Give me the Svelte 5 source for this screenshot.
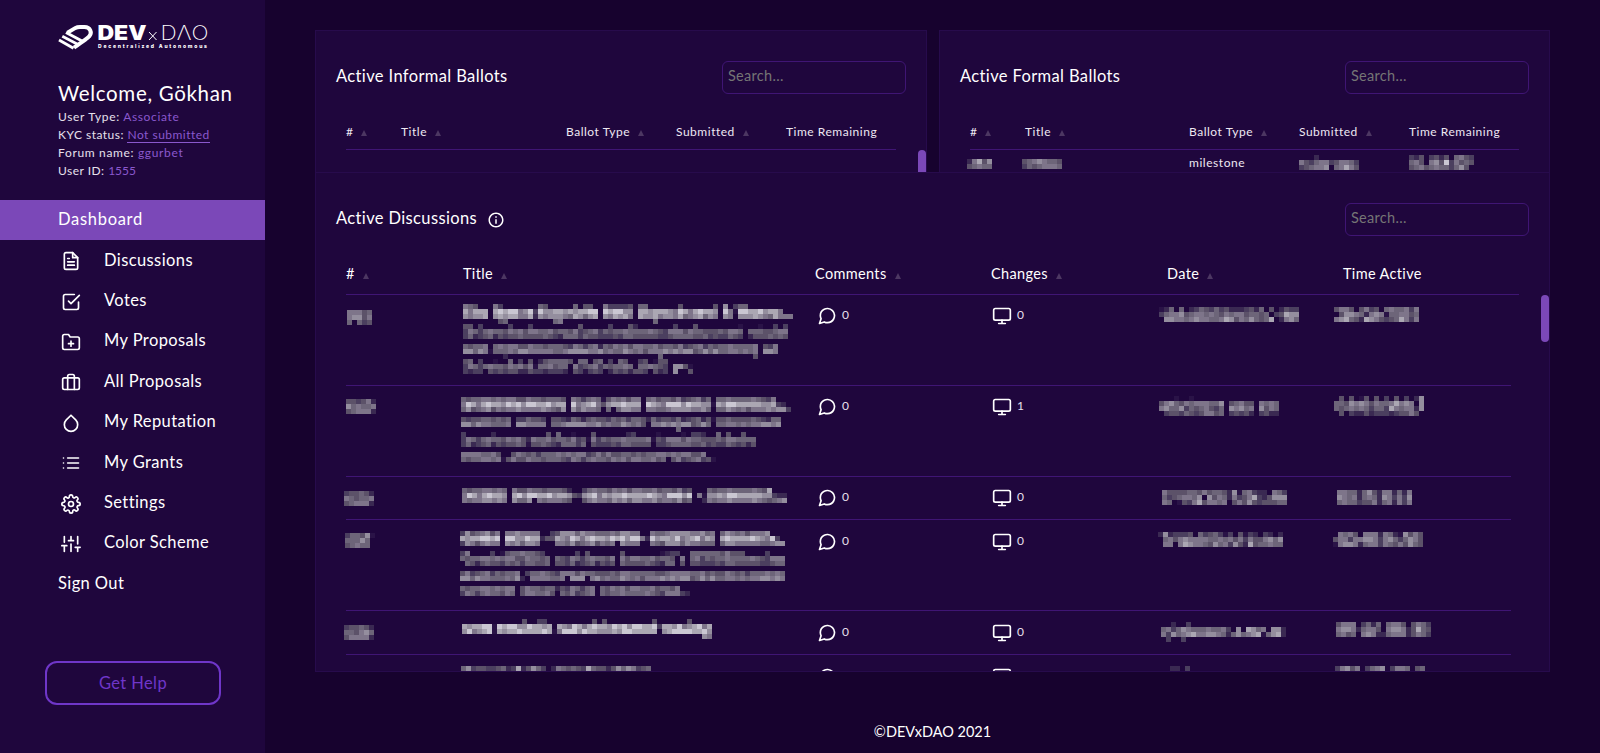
<script>
  const nav = [
    { label: 'Discussions', icon: 'file' },
    { label: 'Votes', icon: 'check' },
    { label: 'My Proposals', icon: 'folder' },
    { label: 'All Proposals', icon: 'briefcase' },
    { label: 'My Reputation', icon: 'droplet' },
    { label: 'My Grants', icon: 'list' },
    { label: 'Settings', icon: 'settings' },
    { label: 'Color Scheme', icon: 'sliders' },
  ];

  const icons = {
    file: '<path d="M14 2H6a2 2 0 0 0-2 2v16a2 2 0 0 0 2 2h12a2 2 0 0 0 2-2V8z"/><path d="M14 2v6h6M16 13H8M16 17H8M10 9H8"/>',
    check: '<path d="M9 11l3 3L22 4"/><path d="M21 12v7a2 2 0 0 1-2 2H5a2 2 0 0 1-2-2V5a2 2 0 0 1 2-2h11"/>',
    folder: '<path d="M22 19a2 2 0 0 1-2 2H4a2 2 0 0 1-2-2V5a2 2 0 0 1 2-2h5l2 3h9a2 2 0 0 1 2 2z"/><path d="M12 11v6M9 14h6"/>',
    briefcase: '<rect x="2" y="7" width="20" height="14" rx="2"/><path d="M16 21V5a2 2 0 0 0-2-2h-4a2 2 0 0 0-2 2v16"/>',
    droplet: '<path d="M12 2.69l5.66 5.66a8 8 0 1 1-11.310 0z"/>',
    list: '<path d="M8 6h13M8 12h13M8 18h13M3 6h.01M3 12h.01M3 18h.01"/>',
    settings: '<circle cx="12" cy="12" r="3"/><path d="M19.4 15a1.650 1.650 0 0 0 .33 1.820l.06.06a2 2 0 0 1-2.830 2.830l-.06-.06a1.650 1.650 0 0 0-1.820-.33 1.650 1.650 0 0 0-1 1.510V21a2 2 0 0 1-4 0v-.09A1.650 1.650 0 0 0 9 19.400a1.650 1.650 0 0 0-1.820.33l-.06.06a2 2 0 0 1-2.830-2.830l.06-.06a1.650 1.650 0 0 0 .33-1.820 1.650 1.650 0 0 0-1.510-1H3a2 2 0 0 1 0-4h.09A1.650 1.650 0 0 0 4.600 9a1.650 1.650 0 0 0-.33-1.820l-.06-.06a2 2 0 0 1 2.830-2.830l.06.06a1.650 1.650 0 0 0 1.820.33H9a1.650 1.650 0 0 0 1-1.510V3a2 2 0 0 1 4 0v.09a1.650 1.650 0 0 0 1 1.510 1.650 1.650 0 0 0 1.820-.33l.06-.06a2 2 0 0 1 2.830 2.830l-.06.06a1.650 1.650 0 0 0-.33 1.820V9a1.650 1.650 0 0 0 1.510 1H21a2 2 0 0 1 0 4h-.09a1.650 1.650 0 0 0-1.510 1z"/>',
    sliders: '<path d="M4 21v-7M4 10V3M12 21v-9M12 8V3M20 21v-5M20 12V3M1 14h6M9 8h6M17 16h6"/>',
    comment: '<path d="M21 11.500a8.380 8.380 0 0 1-.9 3.800 8.500 8.500 0 0 1-7.600 4.700 8.380 8.380 0 0 1-3.800-.9L3 21l1.900-5.700a8.380 8.380 0 0 1-.9-3.800 8.500 8.500 0 0 1 4.700-7.600 8.380 8.380 0 0 1 3.800-.9h.5a8.480 8.480 0 0 1 8 8v.5z"/>',
    monitor: '<rect x="2" y="3" width="20" height="14" rx="2"/><path d="M8 21h8M12 17v4"/>',
  };

  // Shades for redacted cells: each digit is one 5px block, 0 is empty.
  const shades = ['', '#2a1347', '#3a2952', '#4b3f5f', '#5c5269', '#6d6579', '#7e758a', '#948e9e', '#aba7b3', '#cac7d2'];

  const blocks = (rows) =>
    rows.flatMap((row, y) => [...row].map((c, x) => ({ x: x * 5, y: y * 5, c: +c })).filter((b) => b.c));

  // Builds one row of blocks from word spans ("0-4 6-12"); a span may carry its own tone ("14:3").
  const noise = [0, 1, -1, 0, 1, 0, -2, 0, 1, -1, 0, 0, 1, -1, 0, 1, -1];
  const line = (spans, tone, seed = 0) => {
    const out = [];
    for (const span of spans.split(' ')) {
      const [range, own] = span.split(':');
      const [a, b = a] = range.split('-').map(Number);
      for (let i = a; i <= b; i++) {
        out[i] = own ?? Math.max(1, Math.min(9, tone + noise[(i * 5 + ((i * i) % 7) + seed * 3) % noise.length]));
      }
    }
    return Array.from(out, (v) => v ?? 0).join('');
  };

  const ballotCols = ['#', 'Title', 'Ballot Type', 'Submitted', 'Time Remaining'];
  const discussionCols = ['#', 'Title', 'Comments', 'Changes', 'Date', 'Time Active'];

  const formal = {
    id: { x: -3, y: 9, rows: ['26847', '45655'] },
    title: { x: -3, y: 9, rows: ['45676554', '35456665'] },
    submitted: { x: 0, y: 5, rows: ['000200000000', '643566346653', '345667056864'] },
    time: { x: 0, y: 5, rows: ['3240342405643', '5640674936454', '4564565535740'] },
  };

  const discussions = [
    {
      h: 91, pad: 11, comments: 0, changes: 0,
      id: { x: 1, y: 15, rows: ['66645', '67746', '50534'] },
      title: { x: 1, y: 9, rows: [
        line('0:6 1:5 2:4 6:6 7:3 15:5 16:4 22:5 24-25:4 28:6 29-32:3 33:4 35-36:5 43:4 50:4 52:7 54:3 55-56:5', 5),
        line('0-4 6-13 14:3 15-26 28-33 35-50 52:9 53:6 54:1 55-62 63:6', 8),
        line('0-4 6-13 14:2 15-26 28-33 35-50 52:7 53:6 55-62 63-65:6', 7, 1),
        line('7:4 8:5 18:5 19:6 38:5', 5),
        line('0-1:4 3:3 9:3 13:3 23:4 29:3 33:4 34:2 42:3 46:4 55:1 59:1 62:3 64:3', 4),
        line('0-55 57-64', 5, 2),
        line('0-55 57-64', 4, 3),
        '',
        line('0-4 6-26 27:2 28-58 60-62', 5, 1),
        line('0-4 5:1 6-58 60-62', 6, 4),
        line('8:2 39:5 58:4', 4),
        '45030010050304024555540550450305400340144',
        line('0-13 14:1 15-20 22-33 35-40 42-43:7 44:4 45:1', 5, 2),
        line('0-3 5-20 22-27 29-36 38-40 42:7 45:4', 3, 1),
      ] },
      date: { x: -3, y: 12, rows: ['1250502354353422234250402433', '3566745665654656645545034877', '0776656766556874657545802675'] },
      time: { x: -3, y: 12, rows: ['46640463405655636', '04776526761556645', '67854287643458636'] },
    },
    {
      h: 91, pad: 11, comments: 0, changes: 1,
      id: { x: 0, y: 13, rows: ['443462', '756556', '456662'] },
      title: { x: -1, y: 11, rows: [
        line('0-20 22-27 28:1 29-35 37-49 51-62', 5, 1),
        line('0-20 22-27 28:4 29-35 37-49 50:1 51-62 63:3 64:2', 8, 2),
        line('0-20 22-27 29:5 31-35 37-49 51-63 64:7 65:3', 6, 3),
        '',
        line('0-9 11-16 18-36 37:2 38-49 50:1 51-63', 4, 1),
        line('0-9 11-16 18-36 38-49 51-63', 6, 4),
        line('43:5', 5),
        line('0:3 6:2 17:4 19:5 22:1 26:4 33:2 34:3 39:1 44:1 46-47:3 48:2 51:5 53:4 56:4', 4),
        line('0-12 13:2 14-24 25:1 26-37 38:1 39-58', 5, 2),
        line('0-12 13:1 14-24 26-37 39-58', 4, 3),
        '',
        line('0-7 10-48', 5, 5),
        line('0-7 8:1 9:4 10-40 42-48 49:4 50:1', 5, 1),
      ] },
      date: { x: -3, y: 10, rows: ['0001001', '467546566655704564406565', '675573545643507675607465', '034435434664503434203422'] },
      time: { x: -3, y: 10, rows: ['040401404030403027', '554767646556867607', '545656535538656627', '040322423332344640'] },
    },
    {
      h: 43, pad: 11, comments: 0, changes: 0,
      id: { x: -2, y: 14, rows: ['344542', '654556', '456662'] },
      title: { x: 0, y: 11, rows: [
        line('0-8 10-20 21:2 24-45 49-60 61:8', 5, 1),
        line('0-8 10-21 22:4 23:3 24-45 47:6 48:1 49-61 62:3 63-64:2', 8, 2),
        line('0-8 10-13 15-21 24-45 48:2 49-61 62:5 63:6 64:7', 6, 1),
      ] },
      date: { x: 0, y: 13, rows: ['6444455464554271563220653', '5345665707465263468324777', '6501436846656046474344455'] },
      time: { x: 0, y: 13, rows: ['665525742662526', '765625652763637', '565534462562636'] },
    },
    {
      h: 91, pad: 12, comments: 0, changes: 0,
      id: { x: -1, y: 13, rows: ['355471', '555750', '456550'] },
      title: { x: -2, y: 11, rows: [
        line('0:3 1-7 9-15 18:3 19-35 38-50 52-61', 6, 3),
        line('0-7 9-15 16:2 17:4 18:4 19-35 36:6 37:2 38-50 52-62 63:3', 8, 1),
        line('0:3 1-7 9-15 19-30 32-35 38-50 52-64', 6, 2),
        '',
        '360000301455655430000003040000004000000012330055555546444000030',
        line('0-17 19-30 32-42 44:6 46-64', 5, 1),
        line('1-17 19-30 32-42 44:4 46-64', 4, 2),
        '',
        line('0-11 13:3 14-64', 5, 3),
        line('0-11 12:2 14-20 22-24 26-64', 6, 4),
        '',
        line('0-10 12-18 19:2 20-26 28-43', 5, 1),
        line('0-10 12-18 20-26 28-43 44:3 45:2', 5, 2),
      ] },
      date: { x: -4, y: 12, rows: ['2723334053453130413203202', '0564676666556564636446757', '0660687665475637428455655'] },
      time: { x: -4, y: 12, rows: ['065640666265217464', '466366776367535764', '167762566365464754'] },
    },
    {
      h: 44, pad: 12, comments: 0, changes: 0,
      id: { x: -2, y: 14, rows: ['344542', '554675', '466662'] },
      title: { x: 0, y: 8, rows: [
        line('12:4 15-16:3 26:4 28:4 38:4 45:4', 4),
        line('0-5 6:1 7-17 19-38 39:3 40-49', 8, 1),
        line('0-5 6:1 7-17 18:1 19-38 40-49', 8, 3),
        line('48:7 49:6', 6),
      ] },
      date: { x: -1, y: 11, rows: ['0020030000000000000000000', '5635765556556307087560772', '6375678667765257567815782', '0300300000000000000000000'] },
      time: { x: -1, y: 11, rows: ['4666035250566404653', '6776256640677624854', '5645067622566624653'] },
    },
    {
      h: 60, pad: 12, comments: null, changes: null,
      id: null,
      title: { x: -1, y: 11, rows: ['57344334523824753026545438544247576345'] },
      date: { x: 8, y: 11, rows: ['22030'] },
      time: { x: -2, y: 11, rows: ['367460356703665045'] },
    },
  ];
</script>

{#snippet icon(name, size = 20)}
  <svg class="icon" width={size} height={size} viewBox="0 0 24 24">{@html icons[name]}</svg>
{/snippet}

{#snippet redacted(m)}
  {#if m}
    <svg
      class="redacted"
      style="margin-left:{m.x}px;margin-top:{m.y}px"
      width={Math.max(...m.rows.map((r) => r.length)) * 5}
      height={m.rows.length * 5}
    >
      {#each blocks(m.rows) as b}
        <rect x={b.x} y={b.y} width="5" height="5" fill={shades[b.c]} />
      {/each}
    </svg>
  {/if}
{/snippet}

{#snippet head(cols, cls)}
  <div class="thead {cls}">
    {#each cols as col, i}
      <div class="th"><span>{col}</span>{#if i < cols.length - 1}<i class="sort"></i>{/if}</div>
    {/each}
  </div>
{/snippet}

<div class="page">
  <aside>
    <svg class="logo" width="152" height="32" viewBox="0 -2 152 32">
      <g fill="none" stroke="#fff">
        <path d="M9.500 9.600 L17.500 4.900 Q19 4.100 22 4.100 H26.500 C32.500 4.300 34.300 9.500 31.300 13.300 Q30 15 16 24.700" stroke-width="4" />
        <path d="M8 9.500 L24.500 18.300" stroke-width="3" />
        <path d="M4.300 13.200 L20.500 21.800" stroke-width="2.800" />
        <path d="M1 17 L15.500 25.200" stroke-width="2.900" />
      </g>
      <text class="dev" x="39.500" y="16.700" textLength="49" lengthAdjust="spacingAndGlyphs">DEV</text>
      <path d="M91 9 L98.500 17 M98.500 9 L91 17" stroke="#fff" stroke-width="1" />
      <text class="dao" x="102.500" y="16.700" textLength="48" lengthAdjust="spacingAndGlyphs">DΛO</text>
      <text class="tag" x="40" y="25.400" textLength="109">Decentralized Autonomous</text>
    </svg>
    <div class="user">
      <h1>Welcome, Gökhan</h1>
      <p class="wide">User Type: <b>Associate</b></p>
      <p>KYC status: <b class="link">Not submitted</b></p>
      <p class="wide">Forum name: <b>ggurbet</b></p>
      <p>User ID: <b class="tight">1555</b></p>
    </div>
    <nav>
      <a class="active"><span>Dashboard</span></a>
      {#each nav as item}
        <a>{@render icon(item.icon)}<span>{item.label}</span></a>
      {/each}
      <a><span>Sign Out</span></a>
    </nav>
    <button>Get Help</button>
  </aside>

  <main>
    <div class="ballots">
      <section class="card">
        <header><h2>Active Informal Ballots</h2><input placeholder="Search..." /></header>
        {@render head(ballotCols, 'small')}
        <i class="thumb short"></i>
      </section>
      <section class="card">
        <header><h2>Active Formal Ballots</h2><input placeholder="Search..." /></header>
        {@render head(ballotCols, 'small formal')}
        <div class="brow">
          <div>{@render redacted(formal.id)}</div>
          <div>{@render redacted(formal.title)}</div>
          <div class="kind">milestone</div>
          <div>{@render redacted(formal.submitted)}</div>
          <div>{@render redacted(formal.time)}</div>
        </div>
      </section>
    </div>

    <section class="card discussions">
      <header>
        <h2>Active Discussions</h2>
        <svg class="info" width="18" height="18" viewBox="0 0 24 24" fill="#fff"><path d="M11 7h2v2h-2zm0 4h2v6h-2zm1-9C6.480 2 2 6.480 2 12s4.480 10 10 10 10-4.480 10-10S17.520 2 12 2zm0 18c-4.410 0-8-3.590-8-8s3.590-8 8-8 8 3.590 8 8-3.590 8-8 8z" /></svg>
        <input placeholder="Search..." />
      </header>
      {@render head(discussionCols, 'large')}
      <div class="rows">
        {#each discussions as d}
          <div class="row" style="height:{d.h}px">
            <div>{@render redacted(d.id)}</div>
            <div>{@render redacted(d.title)}</div>
            <div class="count" style="padding-top:{d.pad}px">{@render icon('comment')}<span>{d.comments}</span></div>
            <div class="count" style="padding-top:{d.pad}px">{@render icon('monitor')}<span>{d.changes}</span></div>
            <div>{@render redacted(d.date)}</div>
            <div>{@render redacted(d.time)}</div>
          </div>
        {/each}
      </div>
      <i class="thumb"></i>
    </section>
    <footer>©DEVxDAO 2021</footer>
  </main>
</div>

<style>
  :global(body) { margin: 0; background: #17022e; }
  .page {
    display: flex;
    width: 1600px;
    height: 753px;
    overflow: hidden;
    color: #fff;
    background: #17022e;
    font-family: Lato, "Liberation Sans", sans-serif;
    box-sizing: border-box;
  }
  .page :global(*) { box-sizing: border-box; }
  aside { width: 265px; flex: none; background: #1f063d; display: flex; flex-direction: column; }
  .logo { display: block; margin: 21px 0 0 58px; flex: none; overflow: visible; }
  .dev { font: 900 20px Inter, sans-serif; fill: #fff; }
  .dao { font: 200 20px Inter, sans-serif; fill: #fff; }
  .tag { font: 800 5px Inter, sans-serif; fill: #fff; }
  .user { padding: 28px 0 0 58px; height: 147px; flex: none; }
  h1 { margin: 0; font-size: 20.5px; font-weight: 400; line-height: 24px; letter-spacing: 0.68px; white-space: nowrap; }
  .user p { margin: 0; font-size: 12px; line-height: 18px; letter-spacing: 0.48px; color: #e6e0ec; white-space: nowrap; }
  .user p.wide { letter-spacing: 0.66px; }
  .user p:first-of-type { margin-top: 3px; }
  b { font-weight: 400; color: #8a58cd; }
  .tight { letter-spacing: 0; }
  .link { border-bottom: 1px solid #8a58cd; }
  nav { display: flex; flex-direction: column; }
  nav a { display: flex; align-items: center; height: 40.4px; padding-left: 58px; font-size: 16.5px; letter-spacing: 0.4px; white-space: nowrap; }
  nav a.active { height: 40px; background: #7b48b8; letter-spacing: 0.7px; }
  nav a span { position: relative; top: -0.6px; }
  .icon { flex: none; display: block; fill: none; stroke: #fff; stroke-width: 2; stroke-linecap: round; stroke-linejoin: round; }
  nav .icon { margin: 2px 23px 0 3px; }
  button {
    width: 176px; height: 44px; margin: 57px 0 0 45px; padding: 0;
    border: 2px solid #6f36c9; border-radius: 12px; background: none; color: #6f36c9;
    font: 400 16.5px Lato, sans-serif; letter-spacing: 0.4px;
  }
  main { flex: 1; display: flex; flex-direction: column; padding: 30px 50px 0 50px; }
  .ballots { display: grid; grid-template-columns: 612px 611px; gap: 12px; height: 142px; }
  .card { position: relative; overflow: hidden; background: #1f063d; border: 1px solid #270b4c; }
  .ballots .card { border-bottom: 0; }
  .card header { display: flex; align-items: center; height: 93px; padding: 0 20px 2px 20px; }
  h2 { margin: 0; padding-bottom: 1px; font-size: 16.5px; font-weight: 400; letter-spacing: 0.37px; white-space: nowrap; }
  .info { margin: 2px 0 0 9.5px; }
  input {
    width: 184px; height: 33px; margin: 2px 0 0 auto; padding: 0 5px 4px; border: 1px solid #3f1574; border-radius: 6px;
    background: transparent; outline: 0; font: 400 14.5px Lato, sans-serif; letter-spacing: 0.3px; color: #fff;
  }
  input::placeholder { color: #757575; opacity: 1; }
  .thead { display: grid; margin-left: 30px; border-bottom: 1px solid #3f1574; }
  .small { width: 550px; height: 26px; grid-template-columns: 55px 165px 110px 110px 110px; font-size: 12px; letter-spacing: 0.52px; color: #eee8f2; }
  .formal { width: 549px; grid-template-columns: 55px 164px 110px 110px 110px; }
  .large { width: 1173px; height: 29px; grid-template-columns: 117px 352px 176px 176px 176px 176px; font-size: 14.5px; letter-spacing: 0.35px; }
  .th { display: flex; align-items: baseline; line-height: 16px; white-space: nowrap; }
  .sort { margin-left: 8px; border: 3px solid transparent; border-top: 0; border-bottom: 6px solid #4c3762; }
  .brow { display: grid; grid-template-columns: 55px 164px 110px 110px 110px; margin-left: 30px; font-size: 12px; letter-spacing: 0.55px; }
  .kind { padding-top: 5px; line-height: 16px; color: #eee8f2; }
  .redacted { display: block; shape-rendering: crispEdges; }
  .thumb { position: absolute; right: 0; top: 122px; width: 8px; height: 47px; border-radius: 4px; background: #7b48b8; }
  .short { top: 119px; }
  .discussions { height: 500px; flex: none; }
  .rows { width: 1165px; height: 377px; margin-left: 30px; }
  .row { display: grid; grid-template-columns: 116px 350px 175px 175px 175px 174px; border-bottom: 1px solid #3f1574; }
  .count { display: flex; align-items: flex-start; gap: 5px; padding-left: 5px; font-size: 12px; line-height: 18px; color: #e6e0ec; }
  footer { margin-top: 51px; text-align: center; font-size: 14.5px; line-height: 18px; letter-spacing: 0; }
</style>
